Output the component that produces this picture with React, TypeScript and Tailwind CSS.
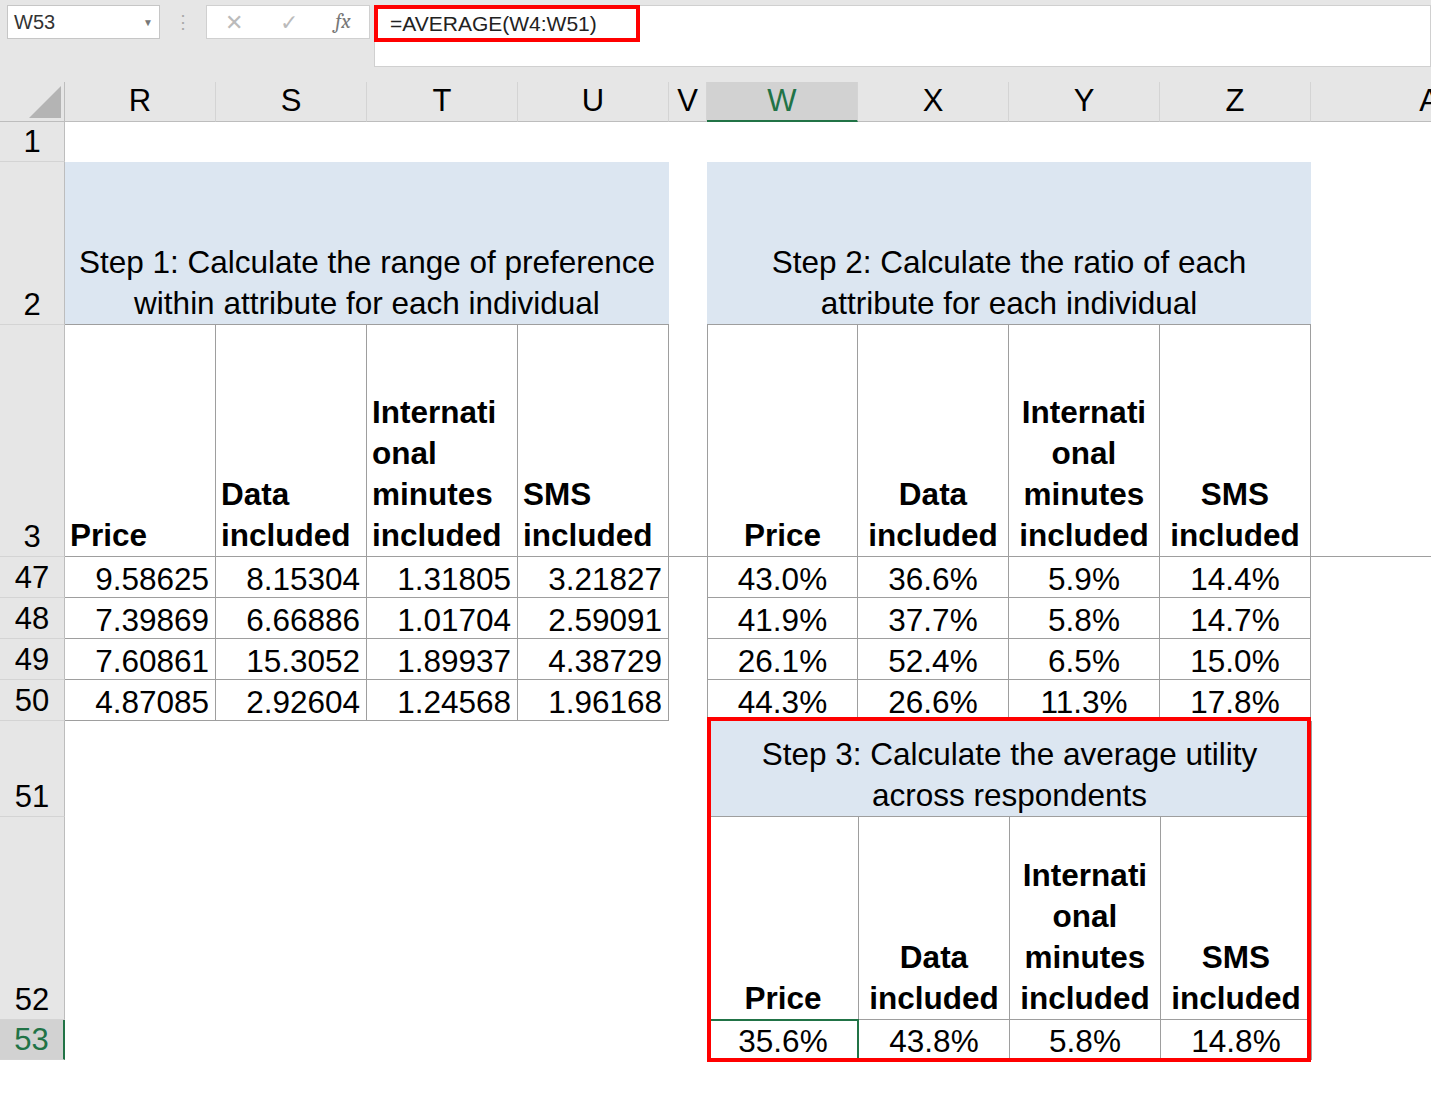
import React from "react";

const F = { fontFamily: '"Liberation Sans", Arial, sans-serif' };
const cols = ["R", "S", "T", "U", "V", "W", "X", "Y", "Z"];
const hdrs = ["Price", "Data|included", "Internati|onal|minutes|included", "SMS|included"];
const ROW = ["", "row-start-1", "row-start-2", "row-start-3", "row-start-4", "row-start-5", "row-start-6", "row-start-7", "row-start-8", "row-start-9", "row-start-10", "row-start-11", "row-start-12"];
const COL = ["", "col-start-1", "col-start-2", "col-start-3", "col-start-4", "col-start-5", "col-start-6", "col-start-7", "col-start-8", "col-start-9", "col-start-10", "col-start-11"];

function Lines({ t }: { t: string }) {
  return <>{t.split("|").map((s, i) => <div key={i}>{s}</div>)}</>;
}

const RH = ({ n, row, sel }: { n: string; row: number; sel?: boolean }) => (
  <div
    className={`${ROW[row]} col-start-1 flex items-end justify-center pb-[1px] text-[31px] leading-[36px] border-b border-[#d4d4d4] ${sel ? "bg-[#d2d2d2] text-[#217346] border-r-2 border-r-[#217346]" : "bg-[#e6e6e6] text-black border-r border-r-[#bdbdbd]"}`}
  >
    {n}
  </div>
);

export default function App() {
  const left = [
    ["9.58625", "8.15304", "1.31805", "3.21827"],
    ["7.39869", "6.66886", "1.01704", "2.59091"],
    ["7.60861", "15.3052", "1.89937", "4.38729"],
    ["4.87085", "2.92604", "1.24568", "1.96168"],
  ];
  const right = [
    ["43.0%", "36.6%", "5.9%", "14.4%"],
    ["41.9%", "37.7%", "5.8%", "14.7%"],
    ["26.1%", "52.4%", "6.5%", "15.0%"],
    ["44.3%", "26.6%", "11.3%", "17.8%"],
  ];
  const avg = ["35.6%", "43.8%", "5.8%", "14.8%"];
  const cell = "border-r border-b border-[#9e9e9e] text-[31.5px] leading-[36px] text-black";
  return (
    <div style={F} className="w-[1431px] h-[1093px] overflow-hidden bg-white">
      <div className="h-[82px] bg-[#e6e6e6] flex items-start pt-[5px] pl-[7px]">
        <div className="w-[153px] h-[34px] bg-white border border-[#c6c6c6] flex items-center justify-between px-[6px] text-[20px] text-[#333]">
          W53<span className="text-[10px] text-[#777]">▼</span>
        </div>
        <div className="w-[46px] flex justify-center text-[#aaa] text-[18px] pt-[4px]">⋮</div>
        <div className="w-[164px] h-[34px] bg-white border border-[#d0d0d0] flex items-center justify-around text-[22px] text-[#bbb]">
          <span>✕</span><span>✓</span><span className="italic font-serif text-[#777] text-[21px]">fx</span>
        </div>
        <div className="ml-[4px] flex-1 h-[62px] bg-white border border-[#d0d0d0] relative">
          <div className="absolute left-[-1px] top-[-1px] w-[266px] h-[37px] border-[4px] border-[#ff0000] flex items-center pl-[12px] text-[21px] text-[#222]">
            =AVERAGE(W4:W51)
          </div>
        </div>
      </div>
      <div className="grid grid-cols-[65px_151px_151px_151px_151px_38px_151px_151px_151px_151px_1fr] grid-rows-[40px_40px_163px_232px_41px_41px_41px_41px_96px_203px_40px_1fr]">
        <div className="row-start-1 col-start-1 bg-[#e6e6e6] border-r border-b border-[#bdbdbd] flex items-end justify-end p-[3px]">
          <svg width="32" height="32"><polygon points="32,0 32,32 0,32" fill="#b4b4b4" /></svg>
        </div>
        {cols.map((c, i) => (
          <div
            key={c}
            className={`row-start-1 ${COL[i + 2]} flex items-center justify-center text-[31px] border-r border-[#d4d4d4] ${c === "W" ? "bg-[#d2d2d2] text-[#217346] border-b-2 border-b-[#217346]" : "bg-[#e6e6e6] text-black border-b border-b-[#bdbdbd]"}`}
          >
            {c}
          </div>
        ))}
        <div className="row-start-1 col-start-11 bg-[#e6e6e6] border-b border-[#bdbdbd] flex items-center justify-end text-[31px] overflow-hidden">
          <span className="mr-[-9px]">A</span>
        </div>
        <RH n="1" row={2} />
        <RH n="2" row={3} />
        <RH n="3" row={4} />
        {["47", "48", "49", "50", "51", "52"].map((n, i) => <RH key={n} n={n} row={5 + i} />)}
        <RH n="53" row={11} sel />
        <div className="row-start-12 col-start-1 bg-[#e6e6e6] border-r border-[#bdbdbd]" />

        <div className="row-start-3 col-start-2 col-end-6 bg-[#dce6f1] border-b border-[#9e9e9e] flex flex-col justify-end items-center text-[31.5px] leading-[41px]">
          <div>Step 1: Calculate the range of preference</div>
          <div>within attribute for each individual</div>
        </div>
        <div className="row-start-3 col-start-7 col-end-11 bg-[#dce6f1] border-b border-[#9e9e9e] flex flex-col justify-end items-center text-[31.5px] leading-[41px]">
          <div>Step 2: Calculate the ratio of each</div>
          <div>attribute for each individual</div>
        </div>
        {hdrs.map((h, i) => (
          <div key={"l" + h} className={`row-start-4 ${COL[i + 2]} ${cell} font-bold leading-[41px] flex flex-col justify-end px-[5px]`}>
            <Lines t={h} />
          </div>
        ))}
        {hdrs.map((h, i) => (
          <div key={"r" + h} className={`row-start-4 ${COL[i + 7]} ${cell} font-bold leading-[41px] flex flex-col justify-end items-center ${i === 0 ? "border-l" : ""}`}>
            <Lines t={h} />
          </div>
        ))}
        <div className="row-start-4 col-start-6 border-b border-[#9e9e9e]" />
        <div className="row-start-4 col-start-11 border-b border-[#9e9e9e]" />

        {left.map((r, ri) =>
          r.map((v, ci) => (
            <div key={`a${ri}${ci}`} className={`${ROW[5 + ri]} ${COL[ci + 2]} ${cell} flex items-end justify-end pr-[6px]`}>
              {v}
            </div>
          ))
        )}
        {right.map((r, ri) =>
          r.map((v, ci) => (
            <div key={`b${ri}${ci}`} className={`${ROW[5 + ri]} ${COL[ci + 7]} ${cell} flex items-end justify-center ${ci === 0 ? "border-l" : ""}`}>
              {v}
            </div>
          ))
        )}

        <div className="row-start-9 row-end-12 col-start-7 col-end-11 relative border-l border-[#9e9e9e]">
          <div className="grid grid-cols-[151px_151px_151px_151px] grid-rows-[96px_203px_40px]">
            <div className="col-span-4 bg-[#dce6f1] border-r border-b border-[#9e9e9e] flex flex-col justify-end items-center text-[31.5px] leading-[41px]">
              <div>Step 3: Calculate the average utility</div>
              <div>across respondents</div>
            </div>
            {hdrs.map((h) => (
              <div key={"s" + h} className={`${cell} font-bold leading-[41px] flex flex-col justify-end items-center`}>
                <Lines t={h} />
              </div>
            ))}
            {avg.map((v, i) => (
              <div key={"v" + i} className={`${cell} flex items-end justify-center relative`}>
                {v}
                {i === 0 && <div className="absolute inset-[-1px] border-2 border-[#217346]" />}
              </div>
            ))}
          </div>
          <div className="absolute left-[-1px] right-0 top-[-4px] bottom-[-2px] border-[4px] border-[#ff0000] pointer-events-none" />
        </div>
      </div>
    </div>
  );
}
